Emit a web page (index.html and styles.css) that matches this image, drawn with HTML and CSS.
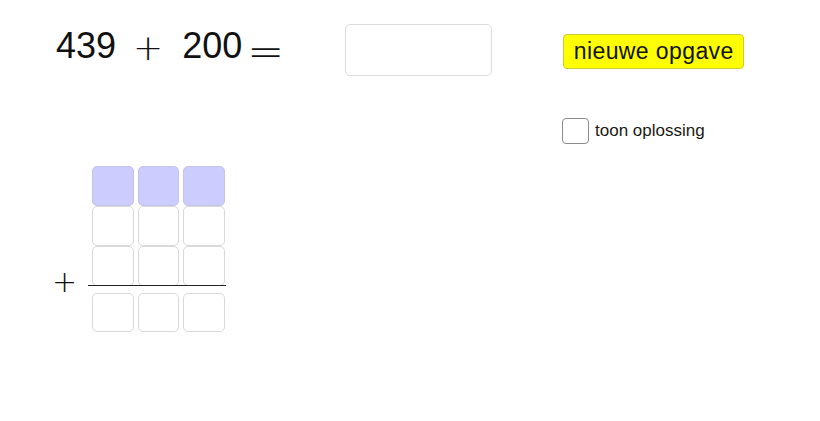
FILE: index.html
```html
<!DOCTYPE html>
<html lang="nl">
<head>
<meta charset="utf-8">
<title>Optellen</title>
<link rel="stylesheet" href="styles.css">
</head>
<body>
<div class="app">
  <div class="top">
    <div class="equation">
      <span class="num n1">439</span>
      <span class="op plus">+</span>
      <span class="num n2">200</span>
      <span class="op eq">=</span>
    </div>
    <div class="answer"></div>
    <button class="new-btn">nieuwe opgave</button>
  </div>
  <label class="check-row">
    <span class="check-box"></span>
    <span class="check-label">toon oplossing</span>
  </label>
  <div class="sum">
    <span class="sum-plus">+</span>
    <div class="columns">
      <div class="cells">
        <div class="cell carry"></div>
        <div class="cell carry"></div>
        <div class="cell carry"></div>
        <div class="cell"></div>
        <div class="cell"></div>
        <div class="cell"></div>
        <div class="cell"></div>
        <div class="cell"></div>
        <div class="cell"></div>
      </div>
      <div class="rule"></div>
      <div class="cells result">
        <div class="cell"></div>
        <div class="cell"></div>
        <div class="cell"></div>
      </div>
    </div>
  </div>
</div>
</body>
</html>
```

FILE: styles.css
```css
html, body {
  margin: 0;
  padding: 0;
  background: #ffffff;
}

.app {
  width: 820px;
  height: 421px;
  overflow: hidden;
  font-family: "Liberation Sans", Arial, sans-serif;
  color: #111;
}

.top {
  display: flex;
  align-items: flex-start;
  padding-top: 24px;
  height: 52px;
}

.equation {
  display: flex;
  align-items: flex-start;
  margin-top: 4px;
  margin-left: 56px;
  font-size: 36px;
  line-height: 36px;
  color: #111;
}

.num {
  font-family: "Liberation Sans", Arial, sans-serif;
}

.op {
  font-family: "DejaVu Sans", sans-serif;
  font-weight: 200;
}

.plus {
  margin-left: 17px;
  margin-top: 2px;
}

.n2 {
  margin-left: 19px;
}

.eq {
  margin-left: 5px;
  margin-top: 6px;
  font-size: 44px;
  line-height: 36px;
}

.answer {
  box-sizing: border-box;
  width: 147px;
  height: 52px;
  border: 1px solid #dcdcdc;
  border-radius: 5px;
  margin-left: 61px;
}

.new-btn {
  box-sizing: border-box;
  margin-top: 10px;
  margin-left: 71px;
  width: 181px;
  height: 35px;
  padding: 0;
  background: #ffff00;
  border: 1px solid #cccc33;
  border-radius: 4px;
  font-family: "Liberation Sans", Arial, sans-serif;
  font-size: 23px;
  letter-spacing: 0.4px;
  color: #111;
  line-height: 33px;
}

.check-row {
  display: flex;
  align-items: center;
  margin-top: 42px;
  margin-left: 562px;
  height: 26px;
}

.check-box {
  box-sizing: border-box;
  width: 27px;
  height: 26px;
  border: 1px solid #8c8c8c;
  border-radius: 4px;
  background: #fff;
}

.check-label {
  margin-left: 6px;
  font-size: 17px;
  color: #1a1a10;
}

.sum {
  display: flex;
  align-items: flex-start;
  margin-top: 22px;
}

.sum-plus {
  margin-left: 52px;
  margin-top: 101px;
  width: 36px;
  font-family: "DejaVu Sans", sans-serif;
  font-weight: 200;
  font-size: 30px;
  line-height: 30px;
  color: #111;
}

.columns {
  display: flex;
  flex-direction: column;
  width: 138px;
}

.cells {
  display: grid;
  grid-template-columns: repeat(3, 41.5px);
  grid-auto-rows: 39.5px;
  column-gap: 4px;
  row-gap: 0.5px;
  margin-left: 4px;
}

.cell {
  box-sizing: border-box;
  border: 1px solid #d9d9d9;
  border-radius: 5px;
  background: #fff;
}

.cell.carry {
  background: #ccccff;
  border-color: #c4c4e4;
}

.rule {
  height: 1px;
  margin-top: -1px;
  background: #222;
}

.result {
  margin-top: 7px;
}
```
